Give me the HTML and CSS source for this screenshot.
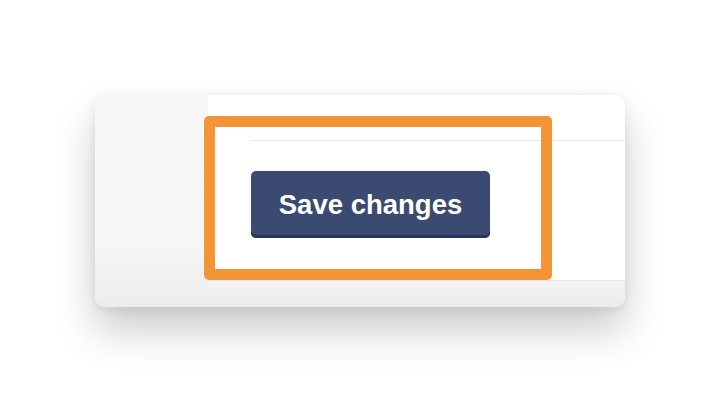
FILE: index.html
```html
<!DOCTYPE html>
<html>
<head>
<meta charset="utf-8">
<link rel="stylesheet" href="styles.css">
</head>
<body>
<div class="stage">
  <div class="card">
    <div class="sidebar"></div>
    <div class="main">
      <div class="top"></div>
      <div class="body">
        <button class="save">Save changes</button>
      </div>
      <div class="footer"></div>
    </div>
    <div class="highlight"></div>
  </div>
</div>
</body>
</html>
```

FILE: styles.css
```css
html, body {
  margin: 0;
  padding: 0;
  background: #ffffff;
  width: 720px;
  height: 403px;
  overflow: hidden;
  font-family: "Liberation Sans", Arial, sans-serif;
}
.stage {
  padding: 95px 0 0 95px;
}
.card {
  position: relative;
  width: 530px;
  height: 212px;
  display: flex;
  border-radius: 10px;
  box-shadow: 0 24px 40px rgba(0, 0, 0, 0.2), 0 2px 12px rgba(0, 0, 0, 0.08);
  background: #ffffff;
}
.sidebar {
  width: 113px;
  border-radius: 10px 0 0 10px;
  background: linear-gradient(#f7f7f7 0%, #f6f6f6 70%, #ececec 100%);
}
.main {
  flex: 1;
  display: flex;
  flex-direction: column;
  border-radius: 0 10px 10px 0;
  overflow: hidden;
}
.top {
  height: 45px;
  margin-left: 43px;
  border-bottom: 1px solid #e8e8e8;
}
.body {
  flex: 1;
  padding: 30px 0 0 43px;
}
.save {
  width: 239px;
  height: 67px;
  border: none;
  border-radius: 5px;
  background: #3b4a70;
  box-shadow: inset 0 -3px 0 #28345a;
  color: #ffffff;
  font-family: "Liberation Sans", Arial, sans-serif;
  font-weight: bold;
  font-size: 27.5px;
  padding: 1px 0 0 0;
  display: flex;
  align-items: center;
  justify-content: center;
}
.footer {
  height: 26px;
  border-top: 1px solid #e6e6e6;
  background: linear-gradient(#f3f3f3, #ececec);
}
.highlight {
  position: absolute;
  left: 109px;
  top: 21px;
  width: 348px;
  height: 164px;
  box-sizing: border-box;
  border: 11.5px solid #f39436;
  border-radius: 5px;
}
```
